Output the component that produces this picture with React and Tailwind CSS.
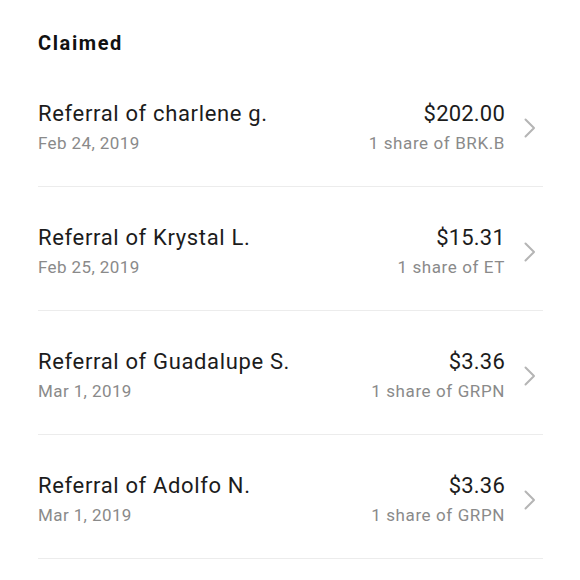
import React from "react";

const referrals = [
  { name: "charlene g.", date: "Feb 24, 2019", amount: "$202.00", share: "1 share of BRK.B" },
  { name: "Krystal L.", date: "Feb 25, 2019", amount: "$15.31", share: "1 share of ET" },
  { name: "Guadalupe S.", date: "Mar 1, 2019", amount: "$3.36", share: "1 share of GRPN" },
  { name: "Adolfo N.", date: "Mar 1, 2019", amount: "$3.36", share: "1 share of GRPN" },
];

const Chevron = () => (
  <svg width="12" height="20" viewBox="0 0 12 20" fill="none" className="shrink-0">
    <path d="M1.5 1.5L10 10l-8.5 8.5" stroke="#b5b5b5" strokeWidth="2" strokeLinecap="round" strokeLinejoin="round" />
  </svg>
);

const App = () => {
  return (
    <div
      className="w-[580px] h-[580px] bg-white overflow-hidden pl-[38px] pr-[37px]"
      style={{ fontFamily: "Roboto, 'Liberation Sans', sans-serif" }}
    >
      <h1 className="pt-[29px] text-[20px] leading-7 font-bold tracking-[1.6px] text-[#111]">Claimed</h1>

      <div className="mt-[6px]">
        {referrals.map((item) => (
          <div key={item.name} className="flex items-center pt-[36px] pb-[29px] border-b border-[#ececec]">
            <div className="flex-1">
              <div className="text-[22px] leading-[30px] tracking-[0.65px] text-[#1c1c1c]">
                Referral of {item.name}
              </div>
              <div className="text-[17px] leading-7 tracking-[0.4px] text-[#8a8a8a]">{item.date}</div>
            </div>
            <div className="text-right">
              <div className="text-[22px] leading-[30px] tracking-[0.2px] text-[#1c1c1c]">{item.amount}</div>
              <div className="text-[17px] leading-7 tracking-[0.6px] text-[#8a8a8a]">{item.share}</div>
            </div>
            <div className="ml-[19px] mr-[7px]">
              <Chevron />
            </div>
          </div>
        ))}
      </div>
    </div>
  );
};

export default App;
